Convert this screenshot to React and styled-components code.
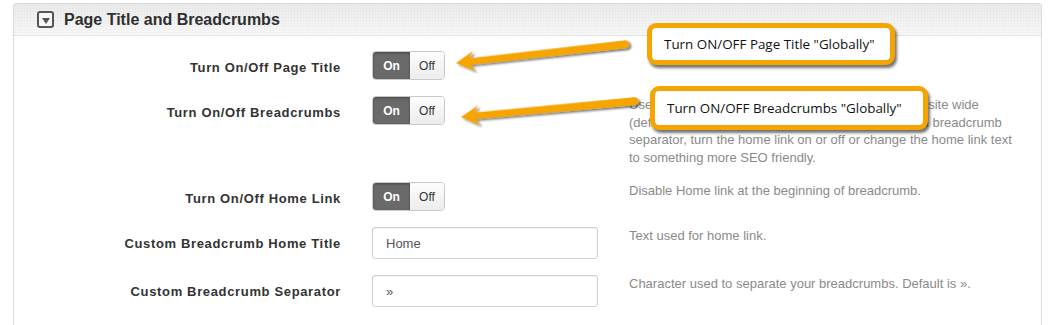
import React from "react";
import styled, { createGlobalStyle } from "styled-components";

//Base page styles
const GlobalStyle = createGlobalStyle`
  body {
    margin: 0;
    background: #fff;
    font-family: "Liberation Sans", Arial, sans-serif;
  }
`;

const Page = styled.div`
  position: relative;
  width: 1056px;
  height: 325px;
  overflow: hidden;
  background: #fff;
`;

//Options panel
const Panel = styled.section`
  margin: 3px 0 0 13px;
  width: 1029px;
  border: 1px solid #dadada;
  border-bottom: none;
  border-radius: 3px 3px 0 0;
  box-sizing: border-box;
  height: 330px;
`;

const Header = styled.header`
  display: flex;
  align-items: center;
  gap: 10px;
  height: 31px;
  padding-left: 23px;
  border-bottom: 1px solid #e3e3e3;
  background-color: #f2f2f2;
  background-image: radial-gradient(rgba(0, 0, 0, 0.05) 0.6px, transparent 0.8px),
    linear-gradient(#eaeaea, #f7f7f7);
  background-size: 3px 3px, 100% 100%;
`;

const Toggler = styled.span`
  display: flex;
  align-items: center;
  justify-content: center;
  width: 13px;
  height: 13px;
  border: 2px solid #555;
  border-radius: 3px;
  background: #f7f7f7;

  &::after {
    content: "";
    border-left: 4.5px solid transparent;
    border-right: 4.5px solid transparent;
    border-top: 6px solid #555;
    margin-top: 2px;
  }
`;

const Title = styled.h3`
  margin: 0;
  font-size: 16px;
  font-weight: bold;
  color: #2f2f2f;
`;

const Body = styled.div`
  display: flex;
  flex-direction: column;
  gap: 16px;
  padding: 15px 20px 0 0;
`;

const Row = styled.div`
  display: grid;
  grid-template-columns: 327px 226px 1fr;
  column-gap: 31px;
  align-items: start;
`;

const Label = styled.label`
  padding-top: 8px;
  line-height: 17px;
  text-align: right;
  font-size: 13px;
  font-weight: bold;
  letter-spacing: 0.65px;
  color: #333;
`;

const Desc = styled.p`
  margin: 0;
  font-size: 13px;
  line-height: 17.5px;
  color: #8a8a8a;
  white-space: nowrap;
`;

//On/Off switch
const Switch = styled.div`
  display: flex;
  width: 73px;
  height: 29px;
  border: 1px solid #c9c9c9;
  border-radius: 4px;
  overflow: hidden;
  box-sizing: border-box;
`;

const SwitchPart = styled.span`
  display: flex;
  align-items: center;
  justify-content: center;
  width: ${(p) => (p.$on ? "38px" : "35px")};
  font-size: 12px;
  font-weight: ${(p) => (p.$on ? "bold" : "normal")};
  color: ${(p) => (p.$on ? "#fff" : "#333")};
  background: ${(p) =>
    p.$on ? "#6a6a6a" : "linear-gradient(#fdfdfd, #ececec)"};
  box-shadow: ${(p) => (p.$on ? "inset 0 1px 3px rgba(0,0,0,0.35)" : "none")};
`;

const Input = styled.div`
  display: flex;
  align-items: center;
  height: 32px;
  padding-left: 13px;
  border: 1px solid #cfcfcf;
  border-radius: 3px;
  box-sizing: border-box;
  font-size: 13px;
  color: #555;
  box-shadow: inset 0 1px 1px rgba(0, 0, 0, 0.05);
`;

//Annotation callouts
const Callout = styled.div`
  position: absolute;
  left: ${(p) => p.$x}px;
  top: ${(p) => p.$y}px;
  width: ${(p) => p.$w}px;
  height: ${(p) => p.$h}px;
  box-sizing: border-box;
  display: flex;
  align-items: center;
  padding-left: 12px;
  border: 5px solid #f6a500;
  border-radius: 9px;
  background: #fff;
  font-family: "Open Sans", "Noto Sans", sans-serif;
  font-size: 13.4px;
  color: #111;
  box-shadow: 2px 3px 3px rgba(0, 0, 0, 0.55);
`;

const Arrows = styled.svg`
  position: absolute;
  left: 0;
  top: 0;
  pointer-events: none;
`;

const Toggle = () => (
  <Switch>
    <SwitchPart $on>On</SwitchPart>
    <SwitchPart>Off</SwitchPart>
  </Switch>
);

const Arrow = ({ x, y, angle, length }) => (
  <g transform={`translate(${x} ${y}) rotate(${angle})`} filter="url(#shadow)">
    <path
      d={`M0 0 L18 -10 L14 -3.2 L${length} -4 A4 4 0 0 1 ${length} 4 L14 3.2 L18 10 Z`}
      fill="#f6a500"
    />
  </g>
);

export default function App() {
  return (
    <>
      <GlobalStyle />
      <Page>
        <Panel>
          <Header>
            <Toggler />
            <Title>Page Title and Breadcrumbs</Title>
          </Header>
          <Body>
            <Row>
              <Label>Turn On/Off Page Title</Label>
              <Toggle />
            </Row>
            <Row>
              <Label>Turn On/Off Breadcrumbs</Label>
              <Toggle />
              <Desc>
                Use this option to show or hide all the breadcrumbs site wide
                <br />
                (default is on). From here you can also set a custom breadcrumb
                <br />
                separator, turn the home link on or off or change the home link text
                <br />
                to something more SEO friendly.
              </Desc>
            </Row>
            <Row>
              <Label>Turn On/Off Home Link</Label>
              <Toggle />
              <Desc>Disable Home link at the beginning of breadcrumb.</Desc>
            </Row>
            <Row>
              <Label>Custom Breadcrumb Home Title</Label>
              <Input>Home</Input>
              <Desc>Text used for home link.</Desc>
            </Row>
            <Row>
              <Label>Custom Breadcrumb Separator</Label>
              <Input>»</Input>
              <Desc>Character used to separate your breadcrumbs. Default is ».</Desc>
            </Row>
          </Body>
        </Panel>

        <Arrows width="1056" height="325" viewBox="0 0 1056 325">
          <defs>
            <filter id="shadow" x="-10%" y="-50%" width="130%" height="200%">
              <feDropShadow dx="2" dy="2" stdDeviation="1.2" floodColor="#000" floodOpacity="0.55" />
            </filter>
          </defs>
          <Arrow x={456} y={63} angle={-6.3} length={170} />
          <Arrow x={461} y={117} angle={-5.2} length={174} />
        </Arrows>

        <Callout $x={647} $y={23} $w={248} $h={42}>
          Turn ON/OFF Page Title "Globally"
        </Callout>
        <Callout $x={650} $y={86} $w={278} $h={44}>
          Turn ON/OFF Breadcrumbs "Globally"
        </Callout>
      </Page>
    </>
  );
}
